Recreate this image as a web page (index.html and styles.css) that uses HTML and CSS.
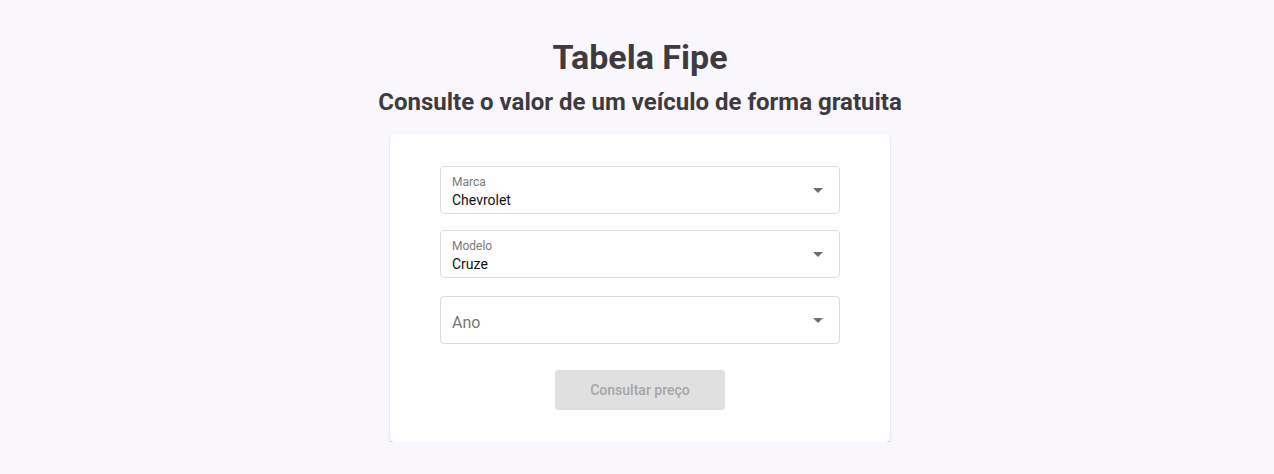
FILE: index.html
```html
<!DOCTYPE html>
<html lang="pt-BR">
<head>
<meta charset="utf-8">
<link rel="stylesheet" href="styles.css">
</head>
<body>
<main class="page">
  <h1 class="title">Tabela Fipe</h1>
  <h2 class="subtitle">Consulte o valor de um veículo de forma gratuita</h2>
  <section class="card">
    <div class="field">
      <div class="field-text">
        <span class="label">Marca</span>
        <span class="value">Chevrolet</span>
      </div>
      <svg class="arrow" viewBox="0 0 24 24" width="24" height="24"><path d="M7 10l5 5 5-5z"/></svg>
    </div>
    <div class="field">
      <div class="field-text">
        <span class="label">Modelo</span>
        <span class="value">Cruze</span>
      </div>
      <svg class="arrow" viewBox="0 0 24 24" width="24" height="24"><path d="M7 10l5 5 5-5z"/></svg>
    </div>
    <div class="field field-empty">
      <div class="field-text">
        <span class="placeholder">Ano</span>
      </div>
      <svg class="arrow" viewBox="0 0 24 24" width="24" height="24"><path d="M7 10l5 5 5-5z"/></svg>
    </div>
    <button class="btn" disabled>Consultar preço</button>
  </section>
</main>
</body>
</html>
```
FILE: styles.css
```css
html, body {
  margin: 0;
  padding: 0;
}
body {
  background: #f9f7fb;
  font-family: Roboto, "Liberation Sans", sans-serif;
  color: #3d3b40;
}
.page {
  display: flex;
  flex-direction: column;
  align-items: center;
  padding-top: 36px;
  padding-left: 6px;
}
.title {
  margin: 0;
  font-size: 34px;
  line-height: 42px;
  font-weight: 700;
}
.subtitle {
  margin: 8px 0 0 0;
  font-size: 24px;
  line-height: 32px;
  font-weight: 700;
}
.card {
  margin-top: 16px;
  width: 500px;
  box-sizing: border-box;
  background: #fff;
  border-radius: 4px;
  box-shadow: 0 2px 1px -1px rgba(0,0,0,0.2), 0 1px 1px 0 rgba(0,0,0,0.14), 0 1px 3px 0 rgba(0,0,0,0.12);
  padding: 32px 50px;
  display: flex;
  flex-direction: column;
  align-items: center;
}
.field {
  width: 400px;
  height: 48px;
  box-sizing: border-box;
  border: 1px solid #dcdcdc;
  border-radius: 4px;
  display: flex;
  align-items: center;
  padding: 0 9px 0 11px;
  margin-bottom: 16px;
}
.field:nth-child(2) {
  margin-bottom: 18px;
}
.field-text {
  flex: 1;
  display: flex;
  flex-direction: column;
  padding-top: 4px;
}
.label {
  font-size: 12px;
  line-height: 14px;
  color: #7a7a7a;
}
.value {
  margin-top: 2px;
  font-size: 14px;
  line-height: 18px;
  color: #111;
}
.placeholder {
  font-size: 16px;
  color: #777;
  padding-top: 0;
}
.arrow {
  fill: #6f6f6f;
}
.btn {
  margin-top: 10px;
  width: 170px;
  height: 40px;
  border: none;
  border-radius: 4px;
  background: #e0e0e0;
  color: #a6a6a6;
  font-family: Roboto, "Liberation Sans", sans-serif;
  font-size: 14px;
  font-weight: 500;
}
```
